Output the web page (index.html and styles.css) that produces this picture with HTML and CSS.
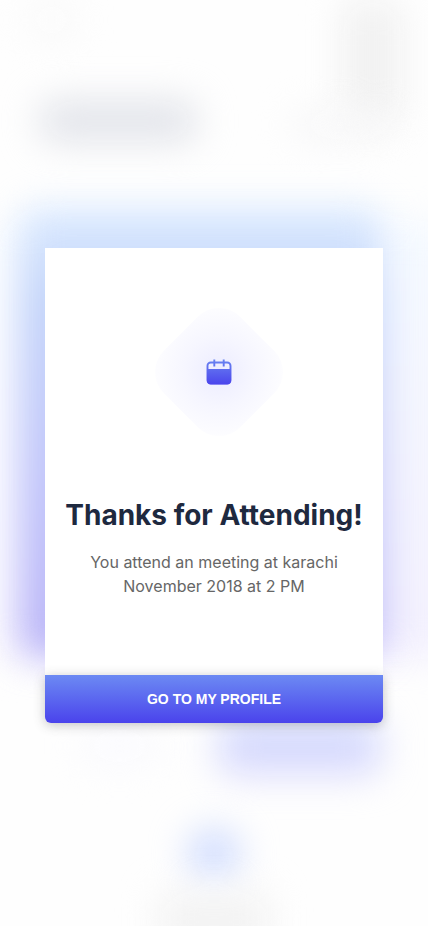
FILE: index.html
```html
<!DOCTYPE html>
<html lang="en">
<head>
  <meta charset="utf-8">
  <meta name="viewport" content="width=device-width, initial-scale=1">
  <title>Thanks for Attending!</title>
  <link rel="stylesheet" href="styles.css">
</head>
<body>
  <div class="backdrop" aria-hidden="true">
    <span class="blob blob-back"></span>
    <span class="blob blob-heading"></span>
    <span class="blob blob-menu"></span>
    <span class="blob blob-filter"></span>
    <span class="blob blob-glow"></span>
    <span class="blob blob-card"></span>
    <span class="blob blob-note"></span>
    <span class="blob blob-action"></span>
    <span class="blob blob-dot"></span>
    <span class="blob blob-footer"></span>
  </div>

  <main class="screen">
    <section class="dialog" role="dialog" aria-labelledby="dialog-title">
      <div class="content">
        <div class="halo">
          <svg class="calendar" viewBox="0 0 26 26" aria-hidden="true">
            <defs>
              <linearGradient id="ink" gradientUnits="userSpaceOnUse" x1="0" y1="0" x2="0" y2="26">
                <stop offset="0" stop-color="#6a85f1"/>
                <stop offset="1" stop-color="#4a43ec"/>
              </linearGradient>
            </defs>
            <rect x="1.500" y="3.500" width="23" height="21" rx="3.200" fill="none" stroke="url(#ink)" stroke-width="1.900"/>
            <path d="M1 10h24v11.500a3.800 3.800 0 0 1-3.800 3.800H4.800a3.800 3.800 0 0 1-3.800-3.800z" fill="url(#ink)"/>
            <path d="M8.300 .5v7M17.700 .5v7" fill="none" stroke="url(#ink)" stroke-width="1.900"/>
          </svg>
        </div>
        <h1 class="title" id="dialog-title">Thanks for Attending!</h1>
        <p class="message">You attend an meeting at karachi<br>November 2018 at 2 PM</p>
      </div>
      <button class="action" type="button">GO TO MY PROFILE</button>
    </section>
  </main>
</body>
</html>
```

FILE: styles.css
```css
* {
  box-sizing: border-box;
}

body {
  margin: 0;
  background: #fefefe;
  font-family: Inter, "Liberation Sans", sans-serif;
}

/* Frosted view of the page under the dialog */
.backdrop {
  position: fixed;
  inset: 0;
  overflow: hidden;
}

.blob {
  position: absolute;
  border-radius: 16px;
  filter: blur(18px);
}

.blob-back {
  left: 6%;
  top: 0;
  width: 12%;
  height: 40px;
  background: #fafafa;
}

.blob-heading {
  left: 9%;
  top: 100px;
  width: 37%;
  height: 42px;
  background: #e2e4ea;
}

.blob-menu {
  left: 80%;
  top: 0;
  width: 14%;
  height: 124px;
  background: #f1f1f1;
}

.blob-filter {
  left: 68%;
  top: 110px;
  width: 23%;
  height: 30px;
  background: #f7f7f8;
}

.blob-glow {
  left: 0;
  right: -6%;
  top: 220px;
  height: 440px;
  background: linear-gradient(#f5faff, #f3f0fe);
}

.blob-card {
  left: 5%;
  right: 11%;
  top: 208px;
  height: 448px;
  background: linear-gradient(#dcebff, #c3d4fa 20%, #c0c4fa 60%, #b9b3f7);
}

.blob-note {
  left: 19%;
  top: 728px;
  width: 18%;
  height: 36px;
  background: #fafafe;
}

.blob-action {
  left: 51%;
  top: 720px;
  width: 38%;
  height: 56px;
  background: linear-gradient(#d0d8fd, #dddcfd);
}

.blob-dot {
  left: 44%;
  top: 828px;
  width: 12%;
  height: 52px;
  border-radius: 50%;
  background: #cfdbfe;
}

.blob-footer {
  left: 37%;
  top: 892px;
  width: 26%;
  height: 60px;
  background: #f3f3f3;
}

.screen {
  position: relative;
  min-height: 100vh;
  display: flex;
  align-items: center;
  padding: 45px;
}

.dialog {
  width: 100%;
  max-width: 420px;
  margin: 45px auto 0;
  background: #fff;
  border-radius: 0 0 6px 6px;
}

.content {
  display: flex;
  flex-direction: column;
  align-items: center;
  padding: 56px 16px 77px;
  text-align: center;
}

.halo {
  position: relative;
  display: grid;
  place-items: center;
  width: 136px;
  height: 136px;
  margin-left: 9px;
}

.halo::before {
  content: "";
  position: absolute;
  inset: 14px;
  border-radius: 30px;
  background: radial-gradient(circle, #ececff 0, #f6f6ff 45%, #fcfcff 80%, #fff 100%);
  transform: rotate(45deg);
}

.calendar {
  position: relative;
  width: 26px;
  height: 26px;
}

.title {
  margin: 57px 0 17px;
  color: #1e293f;
  font-size: 28px;
  font-weight: 700;
  line-height: 36px;
  white-space: nowrap;
}

.message {
  margin: 0;
  color: #666;
  font-size: 16px;
  line-height: 24px;
  white-space: nowrap;
}

.action {
  display: block;
  width: 100%;
  height: 48px;
  padding: 0;
  border: 0;
  border-radius: 0 0 6px 6px;
  background: linear-gradient(#6c8af3, #4a43ec);
  box-shadow: 0 2px 12px rgba(60, 60, 60, 0.3);
  color: #fff;
  font: 700 14px "Liberation Sans", sans-serif;
  cursor: pointer;
}
```
